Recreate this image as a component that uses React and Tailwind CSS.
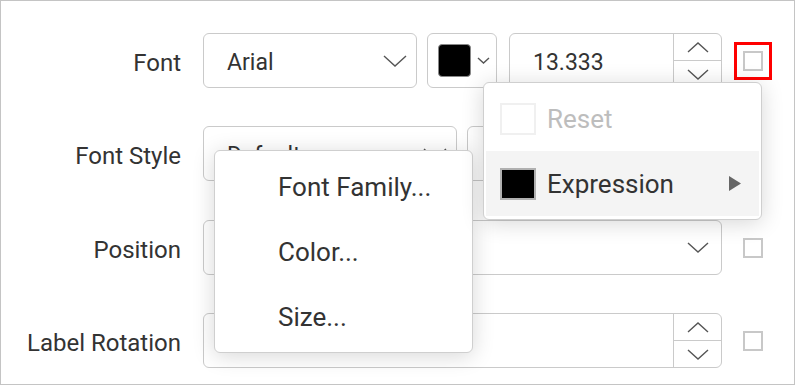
import React from 'react'

const Chevron = ({ up = false, w = 24, h = 12, className = '' }) => (
  <svg width={w} height={h} viewBox={`0 0 ${w} ${h}`} className={className} fill="none">
    <polyline
      points={up ? `1,${h - 1} ${w / 2},1 ${w - 1},${h - 1}` : `1,1 ${w / 2},${h - 1} ${w - 1},1`}
      stroke="#555"
      strokeWidth="1.4"
    />
  </svg>
)

const Label = ({ children }) => (
  <div className="w-[180px] shrink-0 text-right text-[24px] leading-none pt-[5px] text-[#333]">{children}</div>
)

const Select = ({ value, width, chevronW = 24 }) => (
  <div
    className={`${width} h-[55px] shrink-0 flex items-center justify-between pl-[23px] pr-[9px] border border-[#cacaca] rounded-[6px] bg-white text-[23px] text-[#333]`}
  >
    <span className="pt-[5px]">{value}</span>
    <Chevron w={chevronW} h={chevronW / 2} />
  </div>
)

const NumberBox = ({ value, width }) => (
  <div className={`${width} h-[55px] shrink-0 flex border border-[#cacaca] rounded-[6px] bg-white overflow-hidden`}>
    <div className="flex-1 flex items-center pl-[23px] pt-[5px] text-[23px] text-[#333]">{value}</div>
    <div className="w-[48px] flex flex-col border-l border-[#cacaca]">
      <div className="flex-1 flex items-center justify-center border-b border-[#cacaca]">
        <Chevron up w={22} h={11} />
      </div>
      <div className="flex-1 flex items-center justify-center">
        <Chevron w={22} h={11} />
      </div>
    </div>
  </div>
)

const Check = ({ highlighted = false, hidden = false }) => (
  <div
    className={`w-[20px] h-[20px] ml-[21px] shrink-0 ${hidden ? '' : 'border-2 border-[#c8c8c8] bg-white'} ${
      highlighted ? 'outline-[3px] outline-solid outline-[#ff0000] outline-offset-[6px]' : ''
    }`}
  />
)

const MenuItem = ({ children, left, hover = false, muted = false, arrow = false }) => (
  <div className={`h-[65px] flex items-center ${hover ? 'bg-[#f4f4f4]' : ''}`}>
    {left}
    <span className={`text-[26px] leading-none ${muted ? 'text-[#bdbdbd]' : 'text-[#333]'}`}>{children}</span>
    {arrow && (
      <svg width="12" height="15" viewBox="0 0 12 15" className="ml-auto mr-[18px]">
        <polygon points="0,0 12,7.5 0,15" fill="#666" />
      </svg>
    )}
  </div>
)

export default function App() {
  return (
    <div
      className="relative w-[795px] h-[385px] border border-[#c4c4c4] bg-white overflow-hidden"
      style={{ fontFamily: 'Roboto, "Noto Sans", sans-serif' }}
    >
      <div className="flex flex-col pt-[32px]">
        {/* Font */}
        <div className="flex items-center h-[55px]">
          <Label>Font</Label>
          <div className="ml-[22px] flex items-center">
            <Select value="Arial" width="w-[214px]" />
            <div className="ml-[10px] w-[70px] h-[55px] flex items-center pl-[10px] border border-[#cacaca] rounded-[6px]">
              <div className="w-[33px] h-[33px] rounded-[4px] bg-black border border-[#888]" />
              <Chevron w={13} h={7} className="ml-[6px]" />
            </div>
            <div className="ml-[12px]">
              <NumberBox value="13.333" width="w-[213px]" />
            </div>
            <Check highlighted />
          </div>
        </div>

        {/* Font Style */}
        <div className="flex items-center h-[55px] mt-[38px]">
          <Label>Font Style</Label>
          <div className="ml-[22px] flex items-center">
            <Select value="Default" width="w-[254px]" />
            <div className="ml-[10px]">
              <Select value="" width="w-[255px]" />
            </div>
            <Check hidden />
          </div>
        </div>

        {/* Position */}
        <div className="flex items-center h-[55px] mt-[39px]">
          <Label>Position</Label>
          <div className="ml-[22px] flex items-center">
            <div className="w-[519px] h-[55px] flex items-center justify-end pr-[12px] border border-[#cacaca] rounded-[6px]">
              <Chevron w={22} h={11} />
            </div>
            <Check />
          </div>
        </div>

        {/* Label Rotation */}
        <div className="flex items-center h-[55px] mt-[38px]">
          <Label>Label Rotation</Label>
          <div className="ml-[22px] flex items-center">
            <NumberBox value="" width="w-[519px]" />
            <Check />
          </div>
        </div>
      </div>

      {/* font context menu */}
      <div className="absolute left-[213px] top-[149px] w-[259px] py-[3px] px-[2px] bg-white border border-[#cfcfcf] rounded-[6px] shadow-[0_3px_22px_rgba(0,0,0,0.16)]">
        <MenuItem left={<div className="w-[61px]" />}>Font Family...</MenuItem>
        <MenuItem left={<div className="w-[61px]" />}>Color...</MenuItem>
        <MenuItem left={<div className="w-[61px]" />}>Size...</MenuItem>
      </div>

      {/* expression menu */}
      <div className="absolute left-[482px] top-[81px] w-[279px] py-[3px] px-[2px] bg-white border border-[#cfcfcf] rounded-[6px] shadow-[0_3px_22px_rgba(0,0,0,0.16)]">
        <MenuItem muted left={<div className="ml-[14px] mr-[11px] w-[36px] h-[32px] border-2 border-[#f0f0f0]" />}>
          Reset
        </MenuItem>
        <MenuItem hover arrow left={<div className="ml-[14px] mr-[11px] w-[36px] h-[32px] bg-black border-2 border-[#b0b0b0]" />}>
          Expression
        </MenuItem>
      </div>
    </div>
  )
}
